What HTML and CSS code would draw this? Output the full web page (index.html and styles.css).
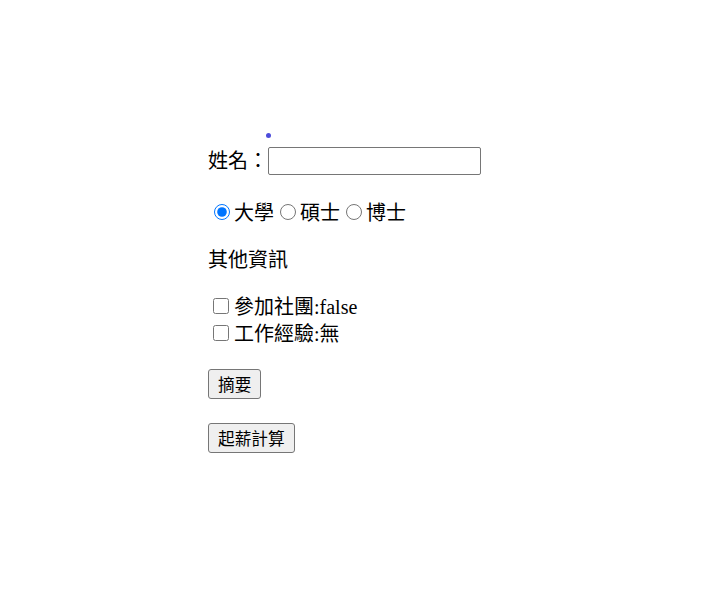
FILE: index.html
```html
<!DOCTYPE html>
<html lang="zh-Hant">
<head>
<meta charset="utf-8">
<title>表單</title>
<link rel="stylesheet" href="styles.css">
</head>
<body>
<div class="app">
  <div class="dot"></div>
  <p class="row name-row">姓名：<input class="text-input" type="text"></p>
  <p class="row radio-row"><label class="opt"><input class="radio" type="radio" name="degree" checked>大學</label><label class="opt"><input class="radio" type="radio" name="degree">碩士</label><label class="opt"><input class="radio" type="radio" name="degree">博士</label></p>
  <p class="row">其他資訊</p>
  <div class="checks">
    <label class="check-line"><input class="check" type="checkbox">參加社團:false</label>
    <label class="check-line"><input class="check" type="checkbox">工作經驗:無</label>
  </div>
  <p class="btn-row"><button class="btn" type="button">摘要</button></p>
  <p class="btn-row second"><button class="btn" type="button">起薪計算</button></p>
</div>
</body>
</html>
```

FILE: styles.css
```css
html, body {
  margin: 0;
  padding: 0;
  background: #ffffff;
}

body {
  font-family: "Liberation Serif", "Noto Sans CJK TC", serif;
  font-size: 20px;
  line-height: 27px;
  color: #000000;
}

.app {
  padding: 133px 0 0 208px;
}

.dot {
  width: 5px;
  height: 5px;
  border-radius: 50%;
  background: #4d4ddb;
  margin-left: 58px;
}

.row {
  margin: 20px 0;
}

.name-row {
  margin-top: 9px;
  display: flex;
  align-items: center;
  height: 28px;
}

.radio-row {
  margin-top: 25px;
}

.text-input {
  box-sizing: border-box;
  width: 213px;
  height: 28px;
  border: 1px solid #767676;
  border-radius: 2px;
  padding: 1px 3px;
  margin: 0;
  font-size: 16px;
  background: #ffffff;
}

.opt {
  display: inline;
}

.radio {
  width: 16px;
  height: 16px;
  margin: 4px 4px 0 6px;
  vertical-align: 0;
}

.checks {
  margin: 20px 0;
}

.check-line {
  display: block;
}

.check {
  width: 16px;
  height: 16px;
  margin: 4px 5px 4px 5px;
  vertical-align: 0;
}

.btn-row {
  margin: 21px 0;
  height: 30px;
  line-height: 30px;
}

.btn-row.second {
  margin-top: 24px;
}

.btn {
  box-sizing: border-box;
  height: 30px;
  padding: 0 9px;
  border: 1px solid #767676;
  border-radius: 3px;
  background: #efefef;
  color: #000000;
  font-family: "Noto Sans CJK TC", sans-serif;
  font-size: 16.67px;
  line-height: 26px;
  vertical-align: top;
}
```
